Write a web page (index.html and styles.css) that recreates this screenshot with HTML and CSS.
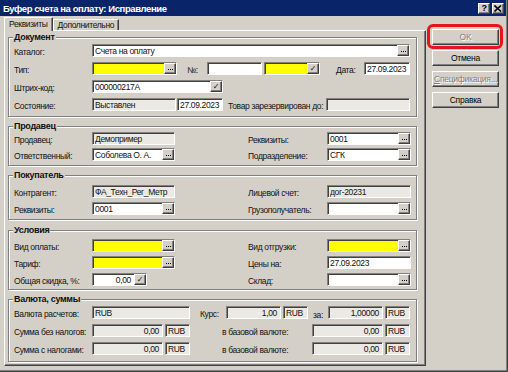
FILE: index.html
```html
<!DOCTYPE html>
<html lang="ru">
<head>
    <meta charset="UTF-8">
    <meta name="viewport" content="width=device-width, initial-scale=1.0">
    <title>Буфер счета на оплату: Исправление</title>
    <link rel="stylesheet" href="styles.css">
</head>
<body>
    <div class="window">
        <div class="titlebar">
            <span class="caption">Буфер счета на оплату: Исправление</span>
            <div class="caption-btns">
                <span class="caption-btn">?</span>
                <span class="caption-btn">
                    <svg width="8" height="7" viewBox="0 0 8 7"><path d="M0.5 0.5 L7 6.5 M7 0.5 L0.5 6.5" stroke="#000" stroke-width="1.6"/></svg>
                </span>
            </div>
        </div>

        <div class="client">
            <div class="main">
                <div class="tabs">
                    <span class="tab tab-active">Реквизиты</span>
                    <span class="tab">Дополнительно</span>
                </div>

                <div class="tab-page">
                    <fieldset class="group group-doc">
                        <legend>Документ</legend>
                        <div class="row">
                            <span class="lbl">Каталог:</span>
                            <span class="field w-318"><span class="val">Счета на оплату</span><span class="pick dots"></span></span>
                        </div>
                        <div class="row">
                            <span class="lbl">Тип:</span>
                            <span class="field req w-85"><span class="val"></span><span class="pick dots"></span></span>
                            <span class="txt ml-10 w-20">№:</span>
                            <span class="field w-55"><span class="val"></span></span>
                            <span class="field req ml-2 w-56"><span class="val"></span><span class="pick check"></span></span>
                            <span class="txt ml-16 w-28">Дата:</span>
                            <span class="field w-46"><span class="val">27.09.2023</span></span>
                        </div>
                        <div class="row">
                            <span class="lbl">Штрих-код:</span>
                            <span class="field w-131"><span class="val">000000217A</span><span class="pick check"></span></span>
                        </div>
                        <div class="row">
                            <span class="lbl">Состояние:</span>
                            <span class="field ro w-84"><span class="val">Выставлен</span></span>
                            <span class="field ml-1 w-46"><span class="val">27.09.2023</span></span>
                            <span class="txt ml-5 w-98">Товар зарезервирован до:</span>
                            <span class="field ro w-84"><span class="val"></span></span>
                        </div>
                    </fieldset>

                    <fieldset class="group group-seller">
                        <legend>Продавец</legend>
                        <div class="row">
                            <span class="lbl">Продавец:</span>
                            <span class="field ro w-83"><span class="val">Демопример</span></span>
                            <span class="lbl lbl-right">Реквизиты:</span>
                            <span class="field w-84"><span class="val">0001</span><span class="pick dots"></span></span>
                        </div>
                        <div class="row">
                            <span class="lbl">Ответственный:</span>
                            <span class="field w-83"><span class="val">Соболева О. А.</span><span class="pick dots"></span></span>
                            <span class="lbl lbl-right">Подразделение:</span>
                            <span class="field w-84"><span class="val">СГК</span><span class="pick dots"></span></span>
                        </div>
                    </fieldset>

                    <fieldset class="group group-buyer">
                        <legend>Покупатель</legend>
                        <div class="row">
                            <span class="lbl">Контрагент:</span>
                            <span class="field ro w-83"><span class="val">ФА_Техн_Рег_Метр</span></span>
                            <span class="lbl lbl-right">Лицевой счет:</span>
                            <span class="field ro w-84"><span class="val">дог-20231</span></span>
                        </div>
                        <div class="row">
                            <span class="lbl">Реквизиты:</span>
                            <span class="field w-83"><span class="val">0001</span><span class="pick dots"></span></span>
                            <span class="lbl lbl-right">Грузополучатель:</span>
                            <span class="field w-84"><span class="val"></span><span class="pick dots"></span></span>
                        </div>
                    </fieldset>

                    <fieldset class="group group-terms">
                        <legend>Условия</legend>
                        <div class="row">
                            <span class="lbl">Вид оплаты:</span>
                            <span class="field req w-83"><span class="val"></span><span class="pick dots"></span></span>
                            <span class="lbl lbl-right">Вид отгрузки:</span>
                            <span class="field req w-84"><span class="val"></span><span class="pick dots"></span></span>
                        </div>
                        <div class="row">
                            <span class="lbl">Тариф:</span>
                            <span class="field req w-83"><span class="val"></span><span class="pick dots"></span></span>
                            <span class="lbl lbl-right">Цены на:</span>
                            <span class="field w-84"><span class="val">27.09.2023</span></span>
                        </div>
                        <div class="row">
                            <span class="lbl">Общая скидка, %:</span>
                            <span class="field num w-55"><span class="val">0,00</span><span class="pick check"></span></span>
                            <span class="lbl lbl-right">Склад:</span>
                            <span class="field w-84"><span class="val"></span><span class="pick dots"></span></span>
                        </div>
                    </fieldset>

                    <fieldset class="group group-money">
                        <legend>Валюта, суммы</legend>
                        <div class="row">
                            <span class="lbl">Валюта расчетов:</span>
                            <span class="field ro w-98"><span class="val">RUB</span></span>
                            <span class="txt ml-10 w-26">Курс:</span>
                            <span class="field ro num w-55"><span class="val">1,00</span></span>
                            <span class="field ro ml-2 w-25"><span class="val">RUB</span></span>
                            <span class="txt txt-low ml-5 w-15">за:</span>
                            <span class="field ro num w-55"><span class="val">1,00000</span></span>
                            <span class="field ro ml-2 w-25"><span class="val">RUB</span></span>
                        </div>
                        <div class="row">
                            <span class="lbl">Сумма без налогов:</span>
                            <span class="field ro num w-71"><span class="val">0,00</span></span>
                            <span class="field ro ml-2 w-25"><span class="val">RUB</span></span>
                            <span class="txt ml-32 w-90">в базовой валюте:</span>
                            <span class="field ro num w-71"><span class="val">0,00</span></span>
                            <span class="field ro ml-2 w-25"><span class="val">RUB</span></span>
                        </div>
                        <div class="row">
                            <span class="lbl">Сумма с налогами:</span>
                            <span class="field ro num w-71"><span class="val">0,00</span></span>
                            <span class="field ro ml-2 w-25"><span class="val">RUB</span></span>
                            <span class="txt ml-32 w-90">в базовой валюте:</span>
                            <span class="field ro num w-71"><span class="val">0,00</span></span>
                            <span class="field ro ml-2 w-25"><span class="val">RUB</span></span>
                        </div>
                    </fieldset>
                </div>
            </div>

            <div class="side">
                <div class="ok-wrap">
                    <button class="btn" disabled>OK</button>
                </div>
                <button class="btn">Отмена</button>
                <button class="btn" disabled><u>С</u>пецификация...</button>
                <button class="btn">Справка</button>
            </div>
        </div>
    </div>
</body>
</html>
```

FILE: styles.css
```css
body {
    margin: 0;
    background: #d4d0c8;
    font-family: "Liberation Sans", Arial, sans-serif;
    font-size: 8.5px;
    letter-spacing: -0.35px;
    color: #111;
}

.window {
    width: 508px;
    height: 372px;
    box-sizing: border-box;
    border-right: 1px solid #404040;
    border-bottom: 1px solid #404040;
    box-shadow: inset -1px -1px #808080;
    overflow: hidden;
}

/* caption */

.titlebar {
    height: 16px;
    margin-right: 1px;
    padding: 0 2px 0 3px;
    background: #0a246a;
    color: #fff;
    display: flex;
    align-items: center;
    justify-content: space-between;
}

.caption {
    font-weight: bold;
    font-size: 9.5px;
    letter-spacing: -0.4px;
}

.caption-btns {
    display: flex;
    gap: 2px;
}

.caption-btn {
    width: 12px;
    height: 11px;
    box-sizing: border-box;
    background: #d4d0c8;
    color: #000;
    border: 1px solid;
    border-color: #fff #404040 #404040 #fff;
    box-shadow: inset -1px -1px #808080;
    font-weight: bold;
    font-size: 9px;
    line-height: 9px;
    display: flex;
    align-items: center;
    justify-content: center;
}

/* client area */

.client {
    display: flex;
    padding: 1px 0 0 4px;
}

.main {
    width: 422px;
}

.tabs {
    display: flex;
    align-items: flex-end;
    height: 13px;
}

.tab {
    height: 11px;
    box-sizing: border-box;
    padding: 0 4px;
    border: 1px solid;
    border-color: #fff #404040 transparent #fff;
    border-bottom: none;
    box-shadow: inset -1px 0 #808080;
    line-height: 10px;
}

.tab-active {
    height: 14px;
    margin-bottom: -1px;
    position: relative;
    z-index: 1;
    background: #d4d0c8;
    line-height: 12px;
}

.tab-page {
    height: 336px;
    box-sizing: border-box;
    padding: 1px 8px 0 3px;
    border: 1px solid;
    border-color: #fff #404040 #404040 #fff;
    box-shadow: inset -1px -1px #808080;
}

/* group boxes */

.group {
    margin: 4px 0 0;
    padding: 0 5px;
    border: 1px solid #808080;
    box-shadow: inset 1px 1px #fff, 1px 1px #fff;
    display: flex;
    flex-direction: column;
}

.group legend {
    padding: 0 1px;
    margin-left: -1px;
    font-weight: bold;
    font-size: 9px;
    line-height: 10px;
    letter-spacing: -0.3px;
    background: #d4d0c8;
}

.group-doc { margin-top: 0; gap: 3px; padding-top: 1px; padding-bottom: 4px; }
.group-seller { gap: 1px; padding-bottom: 3px; }
.group-buyer { gap: 2px; padding-top: 4px; padding-bottom: 3px; }
.group-terms { margin-top: 5px; gap: 2px; padding-top: 3px; padding-bottom: 2px; }
.group-money { gap: 3px; padding-top: 1px; padding-bottom: 5px; }

.row {
    display: flex;
    align-items: center;
    height: 15px;
}

.lbl {
    width: 78px;
    flex: none;
    padding-top: 2px;
    white-space: nowrap;
}

.lbl-right {
    width: 79px;
    margin-left: auto;
}

.txt {
    flex: none;
    padding-top: 2px;
    white-space: nowrap;
}

.txt-low {
    padding-top: 5px;
}

/* edit boxes */

.field {
    flex: none;
    display: flex;
    align-items: center;
    height: 13px;
    box-sizing: border-box;
    border: 1px solid;
    border-color: #808080 #fff #fff #808080;
    box-shadow: inset 1px 1px #404040;
    background: #fff;
    padding-left: 2px;
    overflow: hidden;
    white-space: nowrap;
}

.field.ro { background: #ebe9e4; }
.field.req { background: #ffff00; }

.val {
    flex: 1;
    line-height: 11px;
    padding-top: 1px;
    overflow: hidden;
}

.field.num .val {
    text-align: right;
    padding-right: 3px;
}

.pick {
    flex: none;
    width: 12px;
    height: 11px;
    box-sizing: border-box;
    background: #d4d0c8;
    border: 1px solid;
    border-color: #fff #404040 #404040 #fff;
    box-shadow: inset -1px -1px #808080;
    display: flex;
    align-items: center;
    justify-content: center;
}

.pick.dots::before {
    content: "";
    width: 1px;
    height: 1px;
    margin: 2px 4px 0 0;
    background: #000;
    box-shadow: 2px 0 #000, 4px 0 #000;
}

.pick.check::before {
    content: "\2713";
    font-family: "DejaVu Sans", sans-serif;
    font-size: 8px;
    font-weight: bold;
    line-height: 8px;
    letter-spacing: 0;
}

.w-15 { width: 15px; }
.w-20 { width: 20px; }
.w-25 { width: 25px; }
.w-26 { width: 26px; }
.w-28 { width: 28px; }
.w-46 { width: 46px; }
.w-55 { width: 55px; }
.w-56 { width: 56px; }
.w-71 { width: 71px; }
.w-83 { width: 83px; }
.w-84 { width: 84px; }
.w-85 { width: 85px; }
.w-90 { width: 90px; }
.w-98 { width: 98px; }
.w-131 { width: 131px; }
.w-318 { width: 318px; }

.ml-1 { margin-left: 1px; }
.ml-2 { margin-left: 2px; }
.ml-5 { margin-left: 5px; }
.ml-10 { margin-left: 10px; }
.ml-16 { margin-left: 16px; }
.ml-32 { margin-left: 32px; }

/* dialog buttons */

.side {
    width: 67px;
    margin-left: 6px;
    padding-top: 12px;
    display: flex;
    flex-direction: column;
    gap: 5px;
}

.ok-wrap {
    position: relative;
}

.ok-wrap::after {
    content: "";
    position: absolute;
    top: -5px;
    left: -5px;
    right: -4px;
    bottom: -4px;
    border: 3px solid #e8141c;
    border-radius: 6px;
}

.btn {
    display: block;
    width: 67px;
    height: 16px;
    padding: 0;
    box-sizing: border-box;
    background: #d4d0c8;
    border: 1px solid;
    border-color: #fff #404040 #404040 #fff;
    box-shadow: inset -1px -1px #808080;
    border-radius: 0;
    font-family: inherit;
    font-size: 8.5px;
    letter-spacing: -0.25px;
    color: #000;
}

.btn:disabled {
    color: #808080;
    text-shadow: 1px 1px #fff;
}

.btn u {
    text-decoration: underline;
}
```
